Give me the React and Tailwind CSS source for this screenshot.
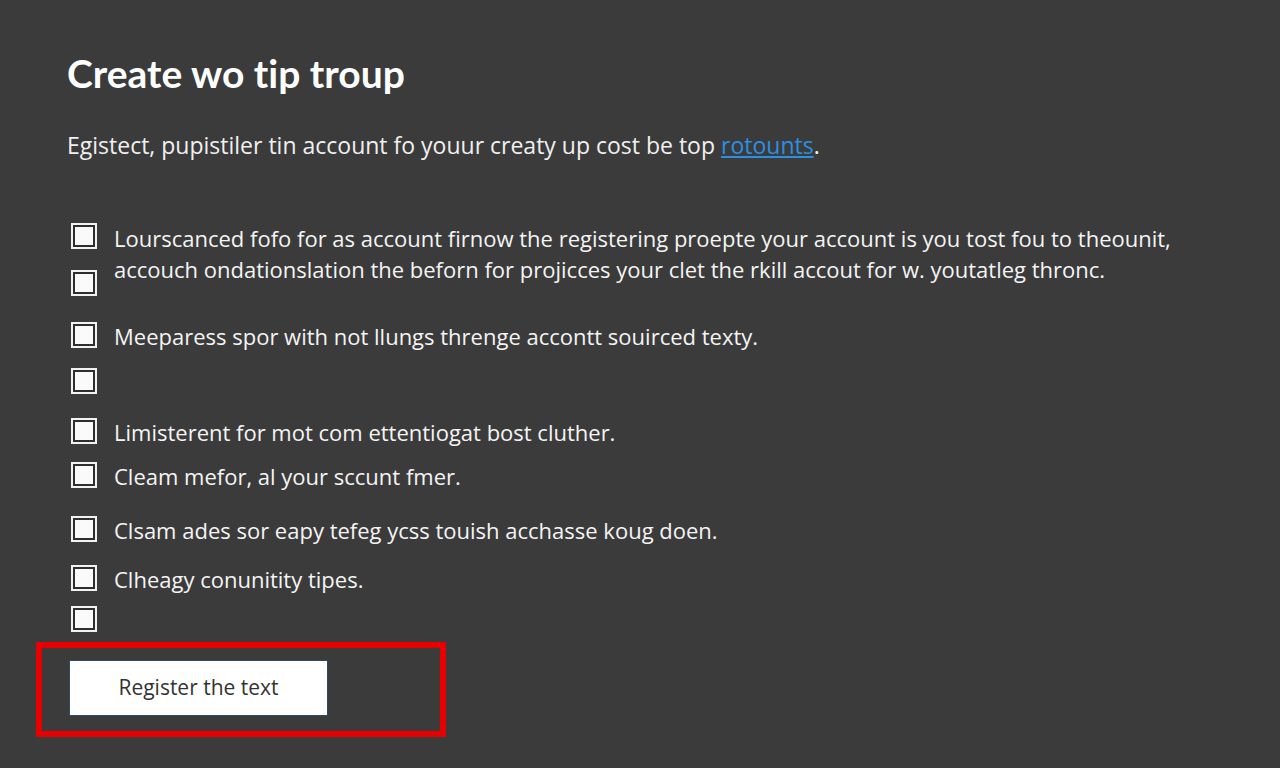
import React from "react";

function Box() {
  return (
    <div className="w-[26px] h-[26px] shrink-0 border-2 border-[#f2f2f2] p-[2px] bg-[#2e2e2e]">
      <div className="w-full h-full bg-[#fafafa]" />
    </div>
  );
}

function Row({ text, mt }) {
  return (
    <div className={`flex items-center h-[30px] ${mt}`}>
      <div className="w-[43px] shrink-0">
        <Box />
      </div>
      {text ? <span className="whitespace-nowrap mt-[3px]">{text}</span> : null}
    </div>
  );
}

export default function App() {
  return (
    <div
      className="w-[1280px] h-[768px] bg-[#3b3b3b] text-[#f4f4f4] overflow-hidden [font-variant-ligatures:none]"
      style={{ fontFamily: '"Open Sans", "Liberation Sans", Arial, sans-serif' }}
    >
      <div className="pl-[67px] pt-[50px]">
        <h1
          className="text-[39px] font-bold leading-[46px] text-white whitespace-nowrap"
          style={{ fontFamily: 'Lato, "Open Sans", sans-serif' }}
        >
          Create wo tip troup
        </h1>
        <p className="mt-[35px] text-[23px] leading-[28px] text-[#f0f0f0] whitespace-nowrap">
          Egistect, pupistiler tin account fo youur creaty up cost be top{" "}
          <span className="text-[#2d8fe0] underline underline-offset-2">rotounts</span>.
        </p>
      </div>

      <div className="pl-[71px] mt-[62px] text-[22px]">
        <div className="flex h-[78px]">
          <div className="w-[43px] shrink-0 flex flex-col">
            <div className="mt-[2px]">
              <Box />
            </div>
            <div className="mt-[21px]">
              <Box />
            </div>
          </div>
          <div className="leading-[31px] whitespace-nowrap pt-[2px]">
            <div>
              Lourscanced fofo for as account firnow the registering proepte your account is you tost fou to theounit,
            </div>
            <div>
              accouch ondationslation the beforn for projicces your clet the rkill accout for w. youtatleg thronc.
            </div>
          </div>
        </div>
        <Row mt="mt-[21px]" text="Meeparess spor with not llungs threnge accontt souirced texty." />
        <Row mt="mt-[16px]" />
        <Row mt="mt-[20px]" text="Limisterent for mot com ettentiogat bost cluther." />
        <Row mt="mt-[14px]" text="Cleam mefor, al your sccunt fmer." />
        <Row mt="mt-[24px]" text="Clsam ades sor eapy tefeg ycss touish acchasse koug doen." />
        <Row mt="mt-[19px]" text="Clheagy conunitity tipes." />
        <Row mt="mt-[11px]" />
      </div>

      <div className="ml-[36px] mt-[8px] w-[410px] h-[95px] border-[6px] border-[#e60000] pl-[27px] pt-[12px]">
        <button className="w-[259px] h-[56px] bg-white border border-[#2f4a66] text-[#333] text-[21px] font-medium">
          Register the text
        </button>
      </div>
    </div>
  );
}
